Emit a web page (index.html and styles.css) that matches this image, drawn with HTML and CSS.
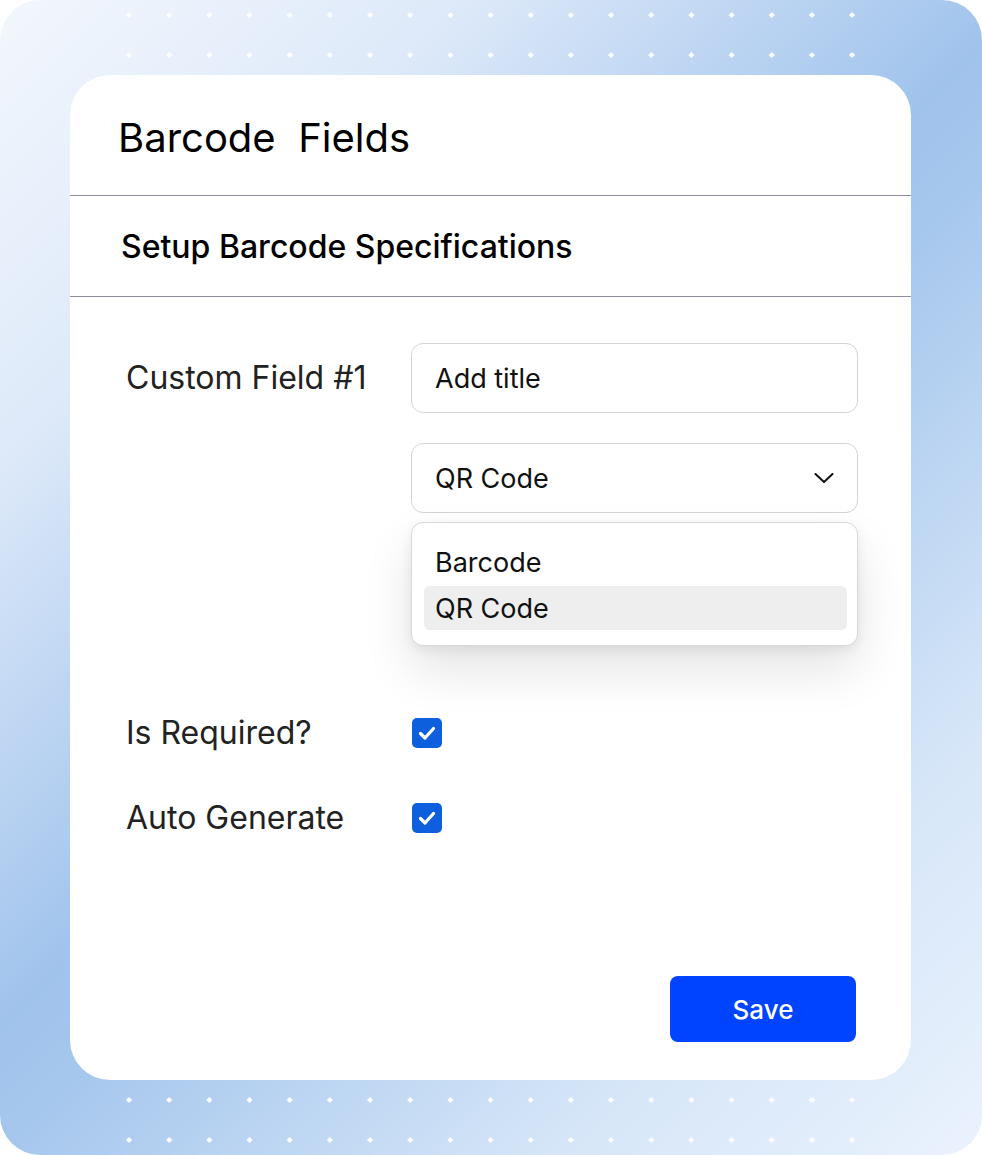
FILE: index.html
```html
<!DOCTYPE html>
<html lang="en">
<head>
<meta charset="utf-8">
<title>Barcode Fields</title>
<link rel="stylesheet" href="styles.css">
</head>
<body>
<div class="frame">
  <svg class="dots" width="982" height="75" viewBox="0 0 982 75" aria-hidden="true">
    <defs>
      <pattern id="dotsTop" patternUnits="userSpaceOnUse" x="109" y="-5" width="40.17" height="40">
        <polygon points="20,17 23,20 20,23 17,20" fill="#ffffff"/>
      </pattern>
    </defs>
    <rect x="109" y="0" width="763" height="75" fill="url(#dotsTop)"/>
  </svg>

  <div class="card">
    <div class="card-head">Barcode&nbsp; Fields</div>
    <div class="card-sub">Setup Barcode Specifications</div>
    <div class="card-body">
      <div class="field-row">
        <div class="label">Custom Field #1</div>
        <div class="control-col">
          <div class="input">Add title</div>
          <div class="select">
            <span>QR Code</span>
            <svg class="chevron" width="20" height="10" viewBox="0 0 20 10" aria-hidden="true">
              <path d="M1.5 1 L10 9 L18.5 1" fill="none" stroke="#111" stroke-width="2" stroke-linecap="round" stroke-linejoin="round"/>
            </svg>
          </div>
          <div class="menu">
            <div class="menu-item">Barcode</div>
            <div class="menu-item active">QR Code</div>
          </div>
        </div>
      </div>

      <div class="check-row first">
        <div class="label">Is Required?</div>
        <div class="checkbox">
          <svg width="30" height="30" viewBox="0 0 30 30" aria-hidden="true">
            <path d="M8.5 15.5 L13 20 L21.5 10.5" fill="none" stroke="#fff" stroke-width="3.2" stroke-linecap="round" stroke-linejoin="round"/>
          </svg>
        </div>
      </div>
      <div class="check-row">
        <div class="label">Auto Generate</div>
        <div class="checkbox">
          <svg width="30" height="30" viewBox="0 0 30 30" aria-hidden="true">
            <path d="M8.5 15.5 L13 20 L21.5 10.5" fill="none" stroke="#fff" stroke-width="3.2" stroke-linecap="round" stroke-linejoin="round"/>
          </svg>
        </div>
      </div>

      <div class="card-foot">
        <button class="btn-save" type="button">Save</button>
      </div>
    </div>
  </div>

  <svg class="dots" width="982" height="75" viewBox="0 0 982 75" aria-hidden="true">
    <defs>
      <pattern id="dotsBottom" patternUnits="userSpaceOnUse" x="109" y="0" width="40.17" height="40">
        <polygon points="20,17 23,20 20,23 17,20" fill="#ffffff"/>
      </pattern>
    </defs>
    <rect x="109" y="0" width="763" height="75" fill="url(#dotsBottom)"/>
  </svg>
</div>
</body>
</html>
```

FILE: styles.css
```css
* { box-sizing: border-box; }

html, body {
  margin: 0;
  padding: 0;
  background: #ffffff;
}

body {
  font-family: Inter, "Noto Sans", "Liberation Sans", sans-serif;
  color: #111;
}

.frame {
  width: 982px;
  height: 1155px;
  border-radius: 40px;
  background: linear-gradient(135deg, #f3f7fd 0%, #dde9f9 22%, #a0c3ec 48%, #a6c7ed 54%, #d6e6f8 80%, #eaf2fd 100%);
  display: flex;
  flex-direction: column;
  overflow: hidden;
}

.dots {
  display: block;
  flex: 0 0 75px;
}

.card {
  flex: 0 0 1005px;
  margin: 0 71px 0 70px;
  background: #ffffff;
  border-radius: 40px;
  display: flex;
  flex-direction: column;
}

.card-head {
  height: 121px;
  padding: 5px 0 0 48px;
  display: flex;
  align-items: center;
  font-size: 40px;
  font-weight: 400;
  color: #000;
  border-bottom: 1px solid #8e8e9c;
}

.card-sub {
  height: 101px;
  padding-left: 51px;
  display: flex;
  align-items: center;
  font-size: 32px;
  font-weight: 500;
  color: #000;
  border-bottom: 1px solid #8e8e9c;
}

.card-body {
  flex: 1;
  display: flex;
  flex-direction: column;
  padding: 46px 53px 38px 55px;
}

.field-row,
.check-row {
  display: grid;
  grid-template-columns: 286px 447px;
}

.label {
  font-size: 32px;
  color: #222;
  line-height: 1.21;
  padding-left: 1px;
}

.field-row > .label {
  height: 70px;
  display: flex;
  align-items: center;
}

.control-col {
  display: flex;
  flex-direction: column;
}

.input,
.select {
  height: 70px;
  border: 1px solid #d4d4d6;
  border-radius: 12px;
  display: flex;
  align-items: center;
  padding: 0 23px;
  font-size: 27px;
  color: #111;
}

.select {
  margin-top: 30px;
  justify-content: space-between;
  padding-right: 23px;
}

.chevron {
  display: block;
}

.menu {
  margin-top: 9px;
  height: 124px;
  border: 1px solid #d8d8da;
  border-radius: 12px;
  background: #fff;
  padding: 17px 10px 0 12px;
  box-shadow: 0 24px 50px rgba(0, 0, 0, 0.11), 0 4px 12px rgba(0, 0, 0, 0.07);
  display: flex;
  flex-direction: column;
  gap: 2px;
}

.menu-item {
  height: 44px;
  display: flex;
  align-items: center;
  padding-left: 11px;
  border-radius: 6px;
  font-size: 27px;
  color: #111;
}

.menu-item.active {
  background: #eeeeee;
}

.check-row {
  grid-template-rows: 30px;
  height: 30px;
  align-items: center;
  margin-top: 55px;
}

.check-row.first {
  margin-top: 72px;
}

.checkbox {
  width: 30px;
  height: 30px;
  margin-left: 1px;
  border-radius: 5px;
  background: #0d5fdd;
}

.checkbox svg {
  display: block;
}

.card-foot {
  margin-top: auto;
  display: flex;
  justify-content: flex-end;
  padding-right: 2px;
}

.btn-save {
  width: 186px;
  height: 66px;
  border: none;
  border-radius: 8px;
  background: #0044ff;
  color: #fff;
  font-family: inherit;
  font-size: 26px;
  font-weight: 500;
  cursor: pointer;
}
```
